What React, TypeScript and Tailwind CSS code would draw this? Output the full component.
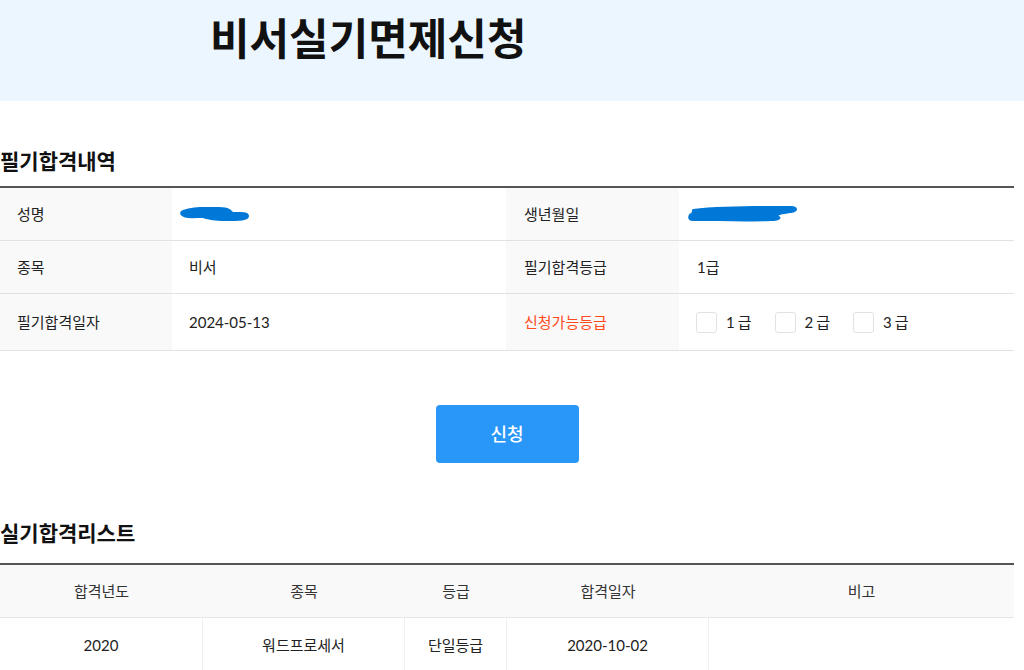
const font = { fontFamily: 'Lato, "Noto Sans CJK KR", sans-serif' };

function Blob({ wide }: { wide?: boolean }) {
  if (wide) {
    return (
      <svg width="112" height="22" viewBox="0 0 112 22" className="block">
        <path
          d="M6 6 C30 3 70 3 104 3 C112 3 112 9 104 10 C96 11 90 12 92 13 C95 15 94 18 84 18 C60 19 30 18 6 18 C0 18 0 12 4 10 C6 8 4 7 6 6 Z"
          fill="#0078d7"
        />
      </svg>
    );
  }
  return (
    <svg width="72" height="20" viewBox="0 0 72 20" className="block">
      <path
        d="M4 6 C14 2 28 3 40 3 C50 3 52 6 54 8 C62 8 70 7 70 12 C70 17 60 17 46 17 C36 17 30 16 24 14 C14 14 6 15 3 12 C0 10 1 7 4 6 Z"
        fill="#0078d7"
      />
    </svg>
  );
}

function Check({ label }: { label: string }) {
  return (
    <label className="flex items-center gap-[9px]">
      <span className="w-[21px] h-[21px] rounded-[3px] border border-[#e2e2e2] bg-white" />
      <span className="text-[15px] text-[#222] tracking-[3px]">{label}</span>
    </label>
  );
}

export default function App() {
  return (
    <div className="w-[1024px] h-[670px] overflow-hidden bg-white text-[#222]" style={font}>
      {/* 상단 타이틀 */}
      <div className="h-[101px] bg-[#ebf6ff] pl-[210px] pt-[9px]">
        <h1 className="text-[43px] leading-[60px] font-bold text-[#111]">비서실기면제신청</h1>
      </div>

      <div className="w-[1014px]">
        <h2 className="mt-[46px] text-[21px] leading-[28px] font-bold text-[#111]">필기합격내역</h2>

        <div className="mt-[11px] border-t-2 border-[#555] text-[15px]">
          <div className="grid grid-cols-[172px_334px_173px_1fr] h-[53px] border-b border-[#e2e2e2]">
            <div className="bg-[#f9f9f9] pl-[17px] flex items-center">성명</div>
            <div className="pl-[7px] flex items-center">
              <Blob />
            </div>
            <div className="bg-[#f9f9f9] pl-[18px] flex items-center">생년월일</div>
            <div className="pl-[8px] flex items-center">
              <Blob wide />
            </div>
          </div>
          <div className="grid grid-cols-[172px_334px_173px_1fr] h-[53px] border-b border-[#e2e2e2]">
            <div className="bg-[#f9f9f9] pl-[17px] flex items-center">종목</div>
            <div className="pl-[17px] flex items-center">비서</div>
            <div className="bg-[#f9f9f9] pl-[18px] flex items-center">필기합격등급</div>
            <div className="pl-[18px] flex items-center">1급</div>
          </div>
          <div className="grid grid-cols-[172px_334px_173px_1fr] h-[57px] border-b border-[#e2e2e2]">
            <div className="bg-[#f9f9f9] pl-[17px] flex items-center">필기합격일자</div>
            <div className="pl-[17px] flex items-center">2024-05-13</div>
            <div className="bg-[#f9f9f9] pl-[18px] flex items-center text-[#ff4a1c]">신청가능등급</div>
            <div className="pl-[17px] flex items-center gap-[20px]">
              <Check label="1급" />
              <Check label="2급" />
              <Check label="3급" />
            </div>
          </div>
        </div>

        <div className="flex justify-center mt-[54px]">
          <button className="w-[143px] h-[58px] rounded-[4px] bg-[#2997f8] text-white text-[18px] font-medium">
            신청
          </button>
        </div>

        <h2 className="mt-[56px] text-[21px] leading-[28px] font-bold text-[#111]">실기합격리스트</h2>

        <div className="mt-[16px] border-t-2 border-[#555] text-[15px] text-[#333]">
          <div className="grid grid-cols-[203px_202px_102px_202px_1fr] h-[53px] bg-[#f9f9f9] border-b border-[#e6e6e6] text-center items-center">
            <div>합격년도</div>
            <div>종목</div>
            <div>등급</div>
            <div>합격일자</div>
            <div>비고</div>
          </div>
          <div className="grid grid-cols-[203px_202px_102px_202px_1fr] h-[54px] text-center text-[#222]">
            <div className="flex items-center justify-center border-r border-[#f0f0f0]">2020</div>
            <div className="flex items-center justify-center border-r border-[#f0f0f0]">워드프로세서</div>
            <div className="flex items-center justify-center border-r border-[#f0f0f0]">단일등급</div>
            <div className="flex items-center justify-center border-r border-[#f0f0f0]">2020-10-02</div>
            <div />
          </div>
        </div>
      </div>
    </div>
  );
}
